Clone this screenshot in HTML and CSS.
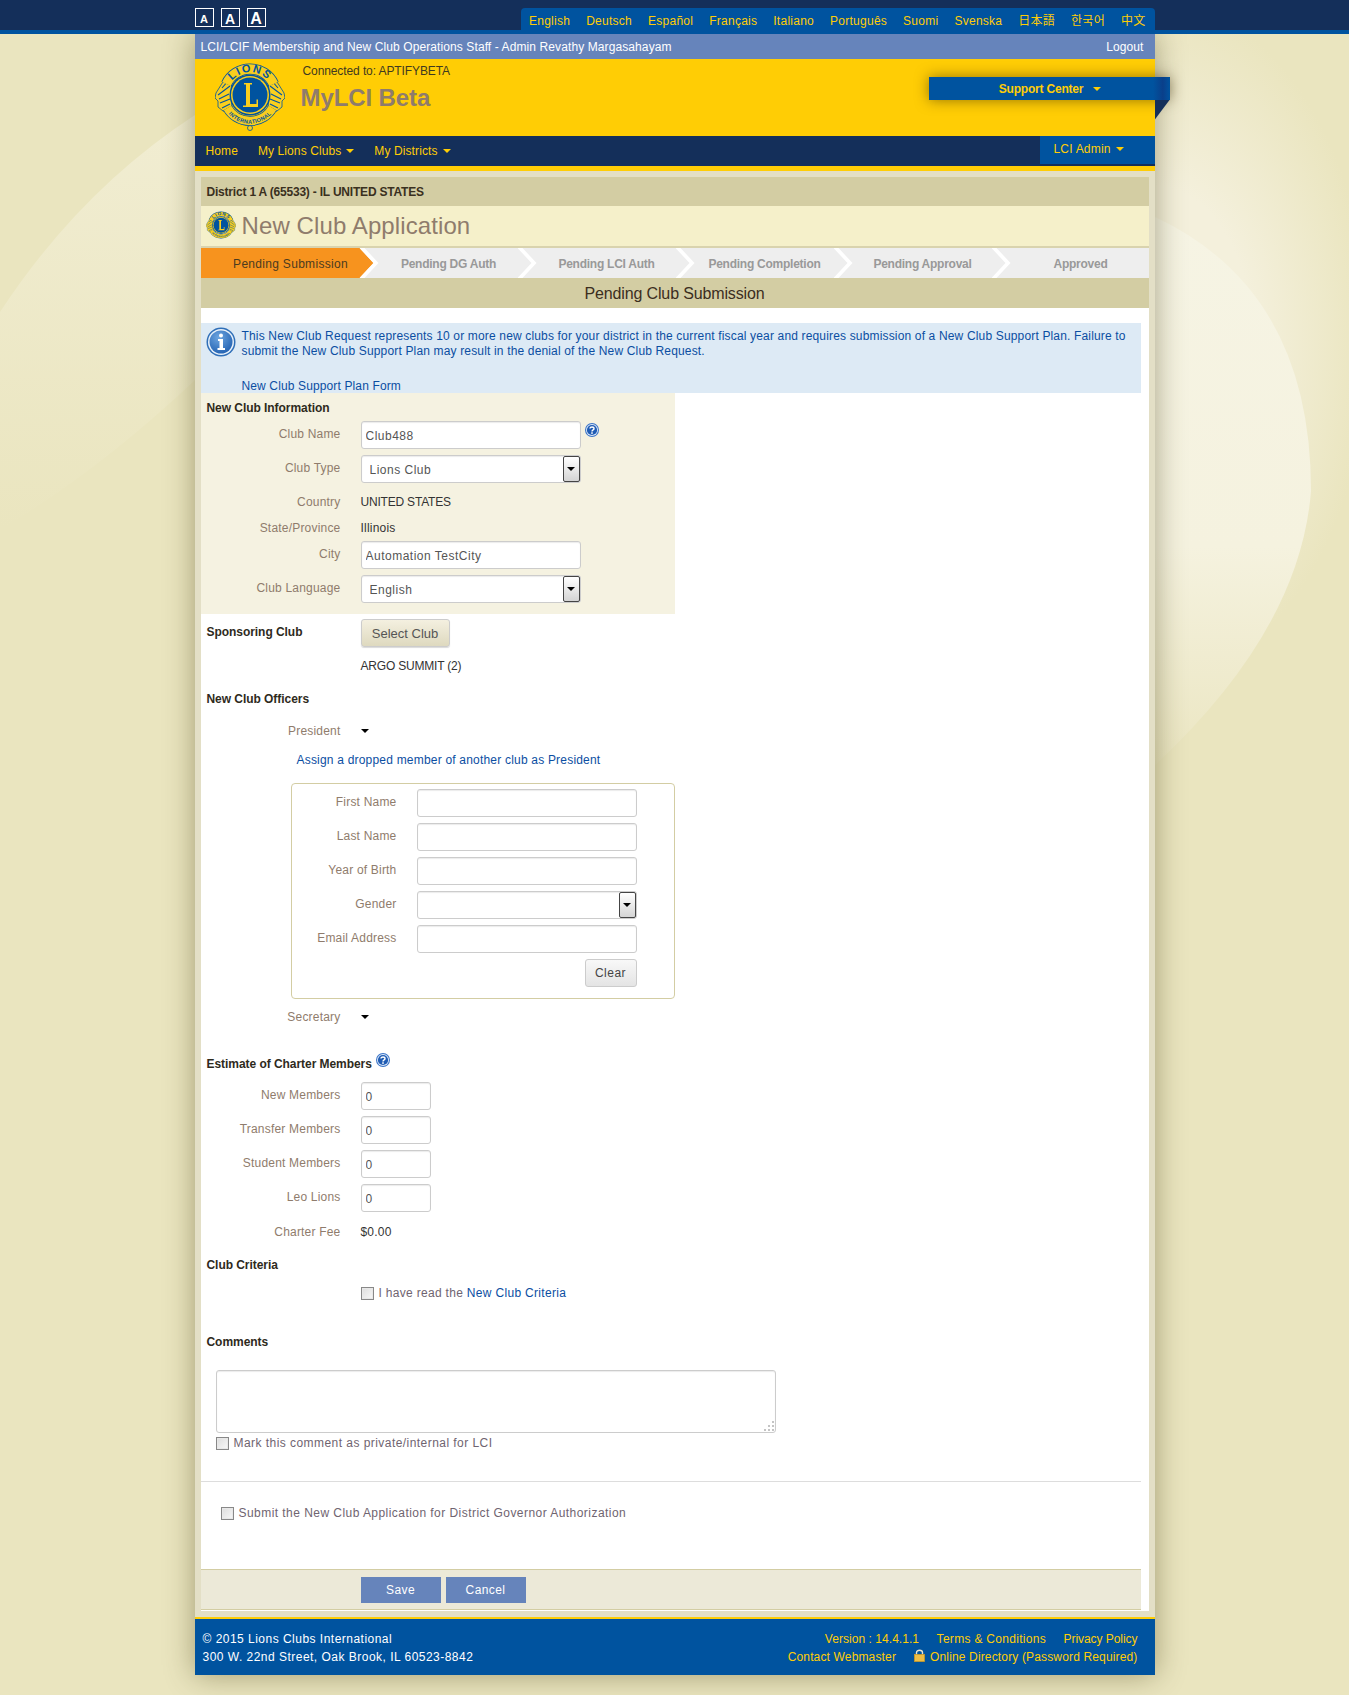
FILE: index.html
```html
<!DOCTYPE html>
<html lang="en">
<head>
    <meta charset="UTF-8">
    <meta name="viewport" content="width=device-width, initial-scale=1.0">
    <title>New Club Application</title>
    <link rel="stylesheet" href="styles.css">
</head>
<body>
    <svg class="backdrop" viewBox="0 0 1349 1695" aria-hidden="true">
        <defs>
            <linearGradient id="leftGlow" x1="0" y1="0" x2="0" y2="1">
                <stop offset="0" stop-color="#f1edd2"/>
                <stop offset="1" stop-color="#eae5bf"/>
            </linearGradient>
            <radialGradient id="rightGlow" cx="1155" cy="340" r="1" gradientUnits="userSpaceOnUse" gradientTransform="translate(1155 340) scale(215 340) translate(-1155 -340)">
                <stop offset="0.45" stop-color="#f4f0dc"/>
                <stop offset="1" stop-color="#eae5bf"/>
            </radialGradient>
            <linearGradient id="rightShape" x1="0" y1="0" x2="0" y2="1">
                <stop offset="0" stop-color="#f6f4e4"/>
                <stop offset="0.6" stop-color="#f5f2df"/>
                <stop offset="1" stop-color="#ebe6c2"/>
            </linearGradient>
        </defs>
        <path d="M0 312 Q80 190 195 115 L195 380 Q100 470 0 530 Z" fill="url(#leftGlow)"/>
        <rect x="1155" y="34" width="194" height="680" fill="url(#rightGlow)"/>
        <path d="M1155 217 Q1311 290 1311 491 Q1300 630 1155 765 Z" fill="url(#rightShape)"/>
    </svg>

    <svg class="sprites" aria-hidden="true">
        <defs>
            <radialGradient id="bubble" cx="0.4" cy="0.3" r="0.8">
                <stop offset="0" stop-color="#6ea6e0"/>
                <stop offset="1" stop-color="#1c5cae"/>
            </radialGradient>
        </defs>
        <symbol id="helpIcon" viewBox="0 0 14 14">
            <circle cx="7" cy="7" r="7" fill="#3a74c8"/>
            <circle cx="7" cy="7" r="6" fill="#dce8f8"/>
            <circle cx="7" cy="7" r="5.100" fill="#1f5cb4"/>
            <path d="M5 5.600 C5 3.500 9 3.500 9 5.700 C9 7 7 6.900 7 8.500" fill="none" stroke="#fff" stroke-width="1.400"/>
            <rect x="6.200" y="9.300" width="1.600" height="1.500" fill="#fff"/>
        </symbol>
        <symbol id="lionHead" viewBox="0 0 18 38">
            <path d="M17 0 L10 2 L6 8 L1 16 L0 21 L3 24 L3 30 L8 34 L14 36 L17 32 L16 18 Z" fill="#f9cf1e" stroke="#00539f" stroke-width="0.8"/>
            <path d="M13 4 L7 11 M15 9 L3 18 M4 22 L14 17 M5 26 L15 22 M7 31 L15 27" fill="none" stroke="#00539f" stroke-width="1.100"/>
        </symbol>
    </svg>

    <header class="top-bar">
        <div class="top-inner">
            <div class="text-sizes">
                <a class="size-box size-small">A</a>
                <a class="size-box size-medium">A</a>
                <a class="size-box size-large">A</a>
            </div>
            <nav class="languages">
                <a>English</a>
                <a>Deutsch</a>
                <a>Español</a>
                <a>Français</a>
                <a>Italiano</a>
                <a>Português</a>
                <a>Suomi</a>
                <a>Svenska</a>
                <a lang="ja">日本語</a>
                <a lang="ko">한국어</a>
                <a lang="zh">中文</a>
            </nav>
        </div>
    </header>

    <div class="page">
        <div class="user-bar">
            <span>LCI/LCIF Membership and New Club Operations Staff - Admin Revathy Margasahayam</span>
            <a>Logout</a>
        </div>

        <div class="brand">
            <svg class="brand-logo" viewBox="0 0 70 68">
                <use href="#lionHead" x="0" y="14" width="18" height="38"/>
                <use href="#lionHead" x="-70" y="14" width="18" height="38" transform="scale(-1 1)"/>
                <path d="M11.400 21 A26 26 0 0 1 58.600 21" fill="none" stroke="#00539f" stroke-width="11"/>
                <path d="M11.400 21 A26 26 0 0 1 58.600 21" fill="none" stroke="#f9cf1e" stroke-width="9.500"/>
                <path d="M12.500 45 A26 26 0 0 0 57.500 45" fill="none" stroke="#00539f" stroke-width="10"/>
                <path d="M12.500 45 A26 26 0 0 0 57.500 45" fill="none" stroke="#f9cf1e" stroke-width="8.500"/>
                <circle cx="35" cy="32" r="20.500" fill="#00539f"/>
                <circle cx="35" cy="32" r="19" fill="#f9cf1e"/>
                <circle cx="35" cy="32" r="17.500" fill="#00539f"/>
                <path d="M29 20 H37 V21.500 H35 V41 H41.500 V36.500 H43 V44 H28 V42.500 H31 V21.500 H29 Z" fill="#f9cf1e"/>
                <path id="logoTop" d="M12 32 A23 23 0 0 1 58 32" fill="none"/>
                <path id="logoBottom" d="M6.500 32 A28.500 28.500 0 0 0 63.500 32" fill="none"/>
                <text class="logo-top"><textPath href="#logoTop" startOffset="50%" text-anchor="middle">LIONS</textPath></text>
                <text class="logo-bottom"><textPath href="#logoBottom" startOffset="50%" text-anchor="middle">INTERNATIONAL</textPath></text>
                <circle cx="35" cy="65" r="2.500" fill="#f9cf1e" stroke="#00539f" stroke-width="0.8"/>
            </svg>
            <div class="brand-text">
                <div class="connected">Connected to: APTIFYBETA</div>
                <div class="brand-name">MyLCI Beta</div>
            </div>
            <div class="support">
                <span>Support Center</span><i class="caret"></i>
            </div>
        </div>

        <nav class="main-nav">
            <a>Home</a>
            <a>My Lions Clubs<i class="caret"></i></a>
            <a>My Districts<i class="caret"></i></a>
            <a class="admin-tab">LCI Admin<i class="caret"></i></a>
        </nav>

        <div class="frame">
            <main class="content">
                <div class="district">District 1 A (65533) - IL UNITED STATES</div>
                <div class="title-bar">
                    <svg class="title-logo" viewBox="0 0 70 68">
                        <use href="#lionHead" x="0" y="14" width="18" height="38"/>
                        <use href="#lionHead" x="-70" y="14" width="18" height="38" transform="scale(-1 1)"/>
                        <path d="M11.400 21 A26 26 0 0 1 58.600 21" fill="none" stroke="#00539f" stroke-width="11"/>
                        <path d="M11.400 21 A26 26 0 0 1 58.600 21" fill="none" stroke="#f9cf1e" stroke-width="9.500"/>
                        <path d="M12.500 45 A26 26 0 0 0 57.500 45" fill="none" stroke="#00539f" stroke-width="10"/>
                        <path d="M12.500 45 A26 26 0 0 0 57.500 45" fill="none" stroke="#f9cf1e" stroke-width="8.500"/>
                        <circle cx="35" cy="32" r="20.500" fill="#00539f"/>
                        <circle cx="35" cy="32" r="19" fill="#f9cf1e"/>
                        <circle cx="35" cy="32" r="17.500" fill="#00539f"/>
                        <path d="M29 20 H37 V21.500 H35 V41 H41.500 V36.500 H43 V44 H28 V42.500 H31 V21.500 H29 Z" fill="#f9cf1e"/>
                        <text class="logo-top"><textPath href="#logoTop" startOffset="50%" text-anchor="middle">LIONS</textPath></text>
                        <text class="logo-bottom"><textPath href="#logoBottom" startOffset="50%" text-anchor="middle">INTERNATIONAL</textPath></text>
                    </svg>
                    <h1>New Club Application</h1>
                </div>
                <ol class="steps">
                    <li class="active">Pending Submission</li>
                    <li>Pending DG Auth</li>
                    <li>Pending LCI Auth</li>
                    <li>Pending Completion</li>
                    <li>Pending Approval</li>
                    <li>Approved</li>
                </ol>
                <div class="status-bar">Pending Club Submission</div>

                <div class="info-box">
                    <svg class="info-icon" viewBox="0 0 30 30">
                        <circle cx="15" cy="15" r="14.500" fill="#2f6fb8"/>
                        <circle cx="15" cy="15" r="13" fill="#e8f1fa"/>
                        <circle cx="15" cy="15" r="11.500" fill="url(#bubble)"/>
                        <circle cx="15" cy="8.500" r="2" fill="#fff"/>
                        <path d="M12 12 H17 V21 H19 V23 H11.500 V21 H13.500 V14 H12 Z" fill="#fff"/>
                    </svg>
                    <div class="info-text">
                        <p>This New Club Request represents 10 or more new clubs for your district in the current fiscal year and requires submission of a New Club Support Plan. Failure to submit the New Club Support Plan may result in the denial of the New Club Request.</p>
                        <a>New Club Support Plan Form</a>
                    </div>
                </div>

                <section class="club-info">
                    <h3>New Club Information</h3>
                    <div class="row">
                        <label>Club Name</label>
                        <input class="field" type="text" value="Club488">
                        <svg class="help help-name"><use href="#helpIcon"/></svg>
                    </div>
                    <div class="row">
                        <label>Club Type</label>
                        <div class="select-wrap">
                            <select class="field"><option>Lions Club</option></select>
                            <span class="select-arrow"></span>
                        </div>
                    </div>
                    <div class="row row-text">
                        <label>Country</label>
                        <span class="value-caps">UNITED STATES</span>
                    </div>
                    <div class="row row-text">
                        <label>State/Province</label>
                        <span>Illinois</span>
                    </div>
                    <div class="row">
                        <label>City</label>
                        <input class="field" type="text" value="Automation TestCity">
                    </div>
                    <div class="row">
                        <label>Club Language</label>
                        <div class="select-wrap">
                            <select class="field"><option>English</option></select>
                            <span class="select-arrow"></span>
                        </div>
                    </div>
                </section>

                <div class="sponsor">
                    <h3>Sponsoring Club</h3>
                    <button class="btn-select" type="button">Select Club</button>
                </div>
                <div class="sponsor-name value-caps">ARGO SUMMIT (2)</div>

                <h3 class="officers-head">New Club Officers</h3>
                <div class="officer president"><label>President</label><i class="arrow-down"></i></div>
                <a class="assign-link">Assign a dropped member of another club as President</a>

                <fieldset class="officer-form">
                    <div class="row">
                        <label>First Name</label>
                        <input class="field" type="text">
                    </div>
                    <div class="row">
                        <label>Last Name</label>
                        <input class="field" type="text">
                    </div>
                    <div class="row">
                        <label>Year of Birth</label>
                        <input class="field" type="text">
                    </div>
                    <div class="row">
                        <label>Gender</label>
                        <div class="select-wrap">
                            <select class="field"><option></option></select>
                            <span class="select-arrow"></span>
                        </div>
                    </div>
                    <div class="row">
                        <label>Email Address</label>
                        <input class="field" type="text">
                    </div>
                    <div class="form-actions">
                        <button class="btn-clear" type="button">Clear</button>
                    </div>
                </fieldset>

                <div class="officer secretary"><label>Secretary</label><i class="arrow-down"></i></div>

                <h3 class="estimate-head">Estimate of Charter Members<svg class="help help-estimate"><use href="#helpIcon"/></svg></h3>
                <div class="estimate">
                    <div class="row">
                        <label>New Members</label>
                        <input class="field field-small" type="text" value="0">
                    </div>
                    <div class="row">
                        <label>Transfer Members</label>
                        <input class="field field-small" type="text" value="0">
                    </div>
                    <div class="row">
                        <label>Student Members</label>
                        <input class="field field-small" type="text" value="0">
                    </div>
                    <div class="row">
                        <label>Leo Lions</label>
                        <input class="field field-small" type="text" value="0">
                    </div>
                    <div class="row charter-fee">
                        <label>Charter Fee</label>
                        <span>$0.00</span>
                    </div>
                </div>

                <h3 class="criteria-head">Club Criteria</h3>
                <div class="check-row criteria-check">
                    <input type="checkbox">
                    <span>I have read the <a>New Club Criteria</a></span>
                </div>

                <h3 class="comments-head">Comments</h3>
                <textarea class="comments"></textarea>
                <div class="check-row private-check">
                    <input type="checkbox">
                    <span>Mark this comment as private/internal for LCI</span>
                </div>

                <hr class="divider">
                <div class="check-row submit-check">
                    <input type="checkbox">
                    <span>Submit the New Club Application for District Governor Authorization</span>
                </div>

                <div class="save-bar">
                    <button type="button">Save</button>
                    <button type="button">Cancel</button>
                </div>
            </main>
        </div>

        <footer class="footer">
            <div class="footer-address">
                <div>© 2015 Lions Clubs International</div>
                <div>300 W. 22nd Street, Oak Brook, IL 60523-8842</div>
            </div>
            <div class="footer-links">
                <div>
                    <span class="version">Version : 14.4.1.1</span>
                    <a class="terms">Terms &amp; Conditions</a>
                    <a class="privacy">Privacy Policy</a>
                </div>
                <div>
                    <a>Contact Webmaster</a>
                    <a class="directory">
                        <svg class="lock" viewBox="0 0 11 13">
                            <path d="M2.500 6 V3.500 C2.500 0.500 8.500 0.500 8.500 3.500 V6" fill="none" stroke="#e8e4d0" stroke-width="1.400"/>
                            <rect x="0.500" y="5.500" width="10" height="7" fill="#eebe45" stroke="#c99a28" stroke-width="0.800"/>
                        </svg>
                        Online Directory (Password Required)
                    </a>
                </div>
            </div>
        </footer>
    </div>
</body>
</html>
```

FILE: styles.css
```css
body {
    margin: 0;
    height: 1695px;
    overflow: hidden;
    position: relative;
    background-color: #eae5bf;
    font-family: "Liberation Sans", Arial, "Noto Sans CJK JP", sans-serif;
    font-size: 12px;
    line-height: 14px;
    letter-spacing: 0.2px;
    color: #333;
}

a {
    cursor: pointer;
}

h3 {
    margin: 0;
    padding-top: 1px;
    font-size: 12px;
    line-height: 14px;
    letter-spacing: -0.05px;
    color: #2e2a1c;
}

.backdrop {
    position: absolute;
    top: 0;
    left: 0;
    width: 1349px;
    height: 1695px;
}

.sprites {
    position: absolute;
    width: 0;
    height: 0;
}

.logo-top {
    font: bold 11px "Liberation Sans", sans-serif;
    letter-spacing: 1.5px;
    fill: #00539f;
}

.logo-bottom {
    font: bold 5.500px "Liberation Sans", sans-serif;
    letter-spacing: 0.3px;
    fill: #00539f;
}

/* top strip */
.top-bar {
    position: relative;
    z-index: 1;
    height: 30px;
    background-color: #142f5a;
    border-bottom: 4px solid #00539f;
}

.top-inner {
    width: 960px;
    margin: 0 auto;
    display: flex;
    justify-content: space-between;
}

.text-sizes {
    display: flex;
    gap: 7px;
    padding-top: 8px;
}

.size-box {
    width: 17px;
    height: 17px;
    border: 1px solid #fff;
    color: #fff;
    font-weight: bold;
    text-align: center;
    letter-spacing: 0;
    display: flex;
    align-items: flex-end;
    justify-content: center;
}

.size-small { font-size: 11px; }
.size-medium { font-size: 14px; }
.size-large { font-size: 16px; }

.languages {
    display: flex;
    gap: 16px;
    height: 26px;
    margin-top: 8px;
    padding: 0 9px 0 8px;
    align-items: center;
    background-color: #00539f;
    border-radius: 4px 4px 0 0;
    letter-spacing: 0.26px;
}

.languages a {
    color: #ffcd05;
}

/* page column */
.page {
    position: relative;
    width: 960px;
    margin: 0 auto;
    box-shadow: 0 0 28px rgba(70, 65, 20, 0.45);
}

.user-bar {
    height: 25px;
    padding: 0 11px 0 6px;
    display: flex;
    justify-content: space-between;
    align-items: center;
    background-color: #6684bb;
    color: #fff;
    letter-spacing: 0.1px;
}

.brand {
    position: relative;
    height: 77px;
    display: flex;
    background-color: #ffcd05;
}

.brand-logo {
    flex: none;
    width: 70px;
    height: 68px;
    margin: 4px 0 0 20px;
}

.brand-text {
    margin-left: 16px;
    padding-top: 5px;
}

.connected {
    margin-left: 2px;
    letter-spacing: -0.1px;
    color: #3f3a20;
}

.brand-name {
    margin-top: 6px;
    font-size: 24px;
    line-height: 28px;
    font-weight: bold;
    letter-spacing: -0.1px;
    color: #8f7c6c;
}

.support {
    position: absolute;
    top: 18px;
    left: 734px;
    width: 241px;
    height: 23px;
    display: flex;
    align-items: center;
    justify-content: center;
    padding-left: 2px;
    box-sizing: border-box;
    background: linear-gradient(to right, #00539f 93%, #0a3f8a 97%, #00539f);
    color: #ffcd05;
    font-weight: bold;
    letter-spacing: -0.2px;
    box-shadow: 0 0 14px rgba(60, 40, 0, 0.55);
}

.support::after {
    content: "";
    position: absolute;
    top: 23px;
    right: 0;
    width: 15px;
    height: 20px;
    background-color: #142f5a;
    clip-path: polygon(0 0, 100% 0, 0 100%);
}

.caret {
    display: inline-block;
    width: 0;
    height: 0;
    margin-left: 5px;
    vertical-align: 2px;
    border-top: 4px solid #ffcd05;
    border-left: 4px solid transparent;
    border-right: 4px solid transparent;
}

.support .caret {
    margin-left: 10px;
}

.main-nav {
    height: 30px;
    display: flex;
    align-items: center;
    gap: 20px;
    padding-left: 11px;
    background-color: #142f5a;
    border-bottom: 5px solid #ffcd05;
    position: relative;
    letter-spacing: 0.1px;
}

.main-nav a {
    color: #ffcd05;
}

.main-nav .admin-tab {
    position: absolute;
    top: 0;
    right: 0;
    width: 115px;
    height: 28px;
    box-sizing: border-box;
    padding: 6px 0 0 14px;
    letter-spacing: 0.2px;
    background-color: #00539f;
}

.frame {
    padding: 6px 6px 6px;
    background-color: #e3dfc6;
}

.content {
    height: 1434px;
    background-color: #fff;
}

.district {
    height: 29px;
    padding-left: 6px;
    line-height: 31px;
    font-weight: bold;
    letter-spacing: -0.2px;
    color: #3a3020;
    background-color: #d3cda3;
}

.title-bar {
    height: 40px;
    display: flex;
    align-items: center;
    padding-left: 5px;
    background-color: #f5f0ca;
    border-bottom: 2px solid #d9d3ae;
}

.title-logo {
    width: 30px;
    height: 30px;
}

.title-bar h1 {
    margin: 0 0 0 6px;
    font-size: 24px;
    line-height: 30px;
    font-weight: normal;
    letter-spacing: 0.1px;
    color: #8f7c6c;
}

/* workflow steps */
.steps {
    display: flex;
    height: 30px;
    margin: 0;
    padding: 0;
    list-style: none;
    background-color: #eee;
}

.steps li {
    position: relative;
    width: 158px;
    height: 30px;
    box-sizing: border-box;
    padding-left: 22px;
    line-height: 32px;
    text-align: center;
    font-weight: bold;
    letter-spacing: -0.25px;
    color: #999;
}

.steps li:not(:last-child)::after {
    content: "";
    position: absolute;
    top: 0;
    left: 159px;
    width: 19px;
    height: 30px;
    background-color: #fff;
    clip-path: polygon(0 0, 5px 0, 19px 50%, 5px 100%, 0 100%, 14px 50%);
    z-index: 1;
}

.steps li.active {
    font-weight: normal;
    letter-spacing: 0.3px;
    color: #4b3b20;
    background-color: #f7931e;
}

.steps li.active::before {
    content: "";
    position: absolute;
    top: 0;
    left: 158px;
    width: 16px;
    height: 30px;
    background-color: #f7931e;
    clip-path: polygon(0 0, 1px 0, 15px 50%, 1px 100%, 0 100%);
}

.status-bar {
    height: 30px;
    line-height: 32px;
    text-align: center;
    font-size: 16px;
    letter-spacing: -0.14px;
    color: #3c2e1e;
    background-color: #d3cda3;
}

.info-box {
    display: flex;
    height: 70px;
    margin: 15px 8px 0 0;
    padding-left: 5px;
    box-sizing: border-box;
    background-color: #ddeaf5;
    color: #0b4ea2;
    letter-spacing: 0.16px;
}

.info-icon {
    flex: none;
    width: 30px;
    height: 30px;
    margin-top: 4px;
}

.info-text {
    margin-left: 6px;
    padding-top: 6px;
}

.info-text p {
    margin: 0 0 21px;
    line-height: 14.500px;
}

.info-text a,
.assign-link,
.criteria-check a {
    color: #0b4ea2;
}

.info-text a {
    letter-spacing: 0.13px;
}

/* form rows */
.row {
    display: flex;
    align-items: flex-start;
    height: 28px;
    margin-bottom: 6px;
    position: relative;
}

.row label {
    flex: none;
    width: 140px;
    padding-top: 6px;
    margin-right: 20px;
    text-align: right;
    color: #8f7c6c;
}

.row-text {
    height: 26px;
    margin-bottom: 0;
    line-height: 26px;
}

.row-text label {
    padding-top: 0;
    line-height: 26px;
}

.value-caps {
    letter-spacing: -0.2px;
}

.club-info {
    width: 474px;
    height: 221px;
    padding-top: 7px;
    box-sizing: border-box;
    background-color: #f5f2e1;
}

.club-info h3 {
    margin: 0 0 6px 6px;
}

.field {
    width: 220px;
    height: 28px;
    box-sizing: border-box;
    padding: 2px 4px 0;
    border: 1px solid #ccc;
    border-radius: 3px;
    background-color: #fff;
    box-shadow: inset 0 1px 1px rgba(0, 0, 0, 0.08);
    font: 12px "Liberation Sans", sans-serif;
    letter-spacing: 0.5px;
    color: #555;
}

.field-small {
    width: 70px;
}

.select-wrap {
    position: relative;
    width: 220px;
    height: 28px;
}

select.field {
    padding-left: 8px;
    appearance: none;
    display: block;
}

.select-arrow {
    position: absolute;
    top: 1px;
    right: 1px;
    width: 15px;
    height: 24px;
    border: 1px solid #444;
    border-radius: 2px;
    background: linear-gradient(to bottom, #fff, #d4d4d4);
}

.select-arrow::after {
    content: "";
    position: absolute;
    top: 10px;
    left: 3px;
    border-top: 4px solid #000;
    border-left: 4px solid transparent;
    border-right: 4px solid transparent;
}

.help {
    flex: none;
    width: 14px;
    height: 14px;
}

.help-name {
    margin: 2px 0 0 4px;
}

.help-estimate {
    margin: -4px 0 0 4px;
}

.sponsor {
    display: flex;
    margin-top: 5px;
}

.sponsor h3 {
    width: 154px;
    margin-left: 6px;
    padding-top: 6px;
}

.btn-select {
    width: 89px;
    height: 28px;
    border: 1px solid #ccc;
    border-radius: 3px;
    background: linear-gradient(to bottom, #f4f0e0, #ded9bf);
    box-shadow: 0 1px 1px rgba(0, 0, 0, 0.15);
    font: 13px "Liberation Sans", sans-serif;
    color: #555;
}

.sponsor-name {
    margin: 12px 0 0 160px;
}

.officers-head {
    margin: 18px 0 0 6px;
}

.officer {
    display: flex;
    align-items: center;
    height: 14px;
}

.officer label {
    width: 140px;
    text-align: right;
    color: #8f7c6c;
}

.president {
    margin-top: 18px;
}

.secretary {
    margin-top: 11px;
}

.arrow-down {
    margin-left: 20px;
    border-top: 4px solid #000;
    border-left: 4px solid transparent;
    border-right: 4px solid transparent;
}

.assign-link {
    display: block;
    margin: 15px 0 0 96px;
}

.officer-form {
    width: 384px;
    height: 216px;
    margin: 16px 0 0 90px;
    padding: 5px 0 0;
    box-sizing: border-box;
    border: 1px solid #d3cda3;
    border-radius: 4px;
}

.officer-form .row label {
    width: 105px;
}

.form-actions {
    width: 345px;
    display: flex;
    justify-content: flex-end;
}

.btn-clear {
    width: 52px;
    height: 28px;
    border: 1px solid #ccc;
    border-radius: 3px;
    background: linear-gradient(to bottom, #f8f8f8, #e4e4e4);
    font: 12px "Liberation Sans", sans-serif;
    letter-spacing: 0.5px;
    color: #444;
}

.estimate-head {
    display: flex;
    height: 14px;
    margin: 32px 0 0 6px;
}

.estimate {
    margin-top: 11px;
}

.charter-fee {
    height: 14px;
    margin: 13px 0 0;
    line-height: 14px;
}

.charter-fee label {
    padding-top: 0;
}

.criteria-head {
    margin: 18px 0 0 6px;
}

.comments-head {
    margin: 34px 0 0 6px;
}

.check-row {
    display: flex;
    align-items: center;
    height: 14px;
    letter-spacing: 0.45px;
    color: #6f6470;
}

.check-row input {
    appearance: none;
    flex: none;
    width: 13px;
    height: 13px;
    margin: 0 5px 0 0;
    border: 1px solid #888;
    background: linear-gradient(to bottom right, #ddd, #f8f8f8);
    box-shadow: inset 0 0 0 1px #e8e8e8;
}

.criteria-check {
    margin: 14px 0 0 160px;
    letter-spacing: 0.31px;
}

.comments {
    display: block;
    width: 560px;
    height: 63px;
    margin: 21px 0 0 15px;
    box-sizing: border-box;
    border: 1px solid #ccc;
    border-radius: 3px;
    box-shadow: inset 0 1px 1px rgba(0, 0, 0, 0.08);
    resize: none;
    background-color: #fff;
    background-image:
        linear-gradient(#c4c4c4, #c4c4c4),
        linear-gradient(#c4c4c4, #c4c4c4),
        linear-gradient(#c4c4c4, #c4c4c4),
        linear-gradient(#c4c4c4, #c4c4c4),
        linear-gradient(#c4c4c4, #c4c4c4),
        linear-gradient(#c4c4c4, #c4c4c4);
    background-size: 2px 2px;
    background-repeat: no-repeat;
    background-position:
        right 1px bottom 1px,
        right 5px bottom 1px,
        right 9px bottom 1px,
        right 1px bottom 5px,
        right 5px bottom 5px,
        right 1px bottom 9px;
}

.private-check {
    margin: 3px 0 0 15px;
}

.divider {
    height: 0;
    margin: 31px 8px 0 0;
    border: 0;
    border-top: 1px solid #ddd;
}

.submit-check {
    margin: 24px 0 0 20px;
}

.save-bar {
    height: 41px;
    margin: 49px 8px 0 0;
    padding: 7px 0 0 160px;
    box-sizing: border-box;
    display: flex;
    gap: 5px;
    background-color: #ece9d8;
    border-top: 1px solid #d3cda3;
    border-bottom: 1px solid #d3cda3;
}

.save-bar button {
    width: 80px;
    height: 26px;
    border: 0;
    background-color: #6684bb;
    color: #fff;
    font: 12px "Liberation Sans", sans-serif;
    letter-spacing: 0.4px;
}

/* footer */
.footer {
    height: 58px;
    display: flex;
    justify-content: space-between;
    padding: 11px 17px 0 8px;
    box-sizing: border-box;
    background-color: #00539f;
    border-top: 2px solid #ffcd05;
    line-height: 18px;
    color: #fff;
}

.footer-address {
    letter-spacing: 0.48px;
}

.footer-links {
    text-align: right;
    letter-spacing: 0.15px;
    color: #ffcd05;
}

.footer-links span,
.footer-links a {
    margin-left: 14px;
}

.footer-links .version {
    letter-spacing: 0.05px;
}

.footer-links .terms {
    letter-spacing: 0.3px;
}

.footer-links .privacy {
    letter-spacing: -0.05px;
}

.lock {
    width: 11px;
    height: 13px;
    margin-right: 2px;
    vertical-align: -1px;
}
```
